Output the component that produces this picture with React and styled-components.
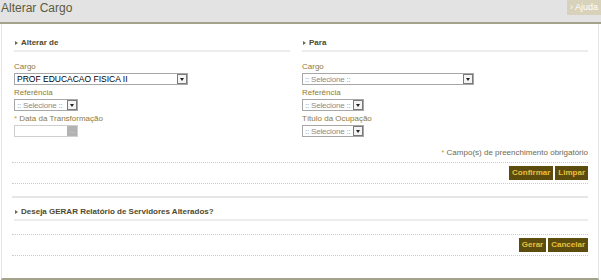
import React from 'react';
import styled, { createGlobalStyle } from 'styled-components';

const GlobalStyle = createGlobalStyle`
    body {
        margin: 0;
        background: #ffffff;
        font-family: "Liberation Sans", Arial, sans-serif;
    }
`;

const Page = styled.div`
    width: 601px;
    height: 280px;
    display: flex;
    flex-direction: column;
    overflow: hidden;
`;

const Header = styled.div`
    height: 22px;
    background: #e3e3e3;
    border-bottom: 2px solid #a3a38c;
    display: flex;
    justify-content: space-between;
    align-items: flex-start;
`;

const Title = styled.div`
    font-size: 12px;
    color: #5c5a3e;
    padding: 1px 0 0 1px;
    line-height: 14px;
`;

const HelpButton = styled.div`
    width: 34px;
    height: 15px;
    background: #d8d2ba;
    color: #ffffff;
    font-size: 9px;
    line-height: 15px;
    text-align: center;
`;

const Body = styled.div`
    flex: 1;
    margin: 0 2px 0 1px;
    border-left: 1px solid #e4e4e4;
    border-right: 1px solid #e4e4e4;
    border-bottom: 2px solid #a3a38c;
    padding: 14px 10px 0 10px;
    display: flex;
    flex-direction: column;
`;

const Columns = styled.div`
    display: grid;
    grid-template-columns: 288px 286px;
    padding-left: 2px;
`;

const Column = styled.div`
    display: flex;
    flex-direction: column;
`;

const SectionTitle = styled.div`
    font-size: 8px;
    font-weight: bold;
    color: #4e4a2e;
    border-bottom: 2px solid #ececec;
    padding: 0 0 2px 1px;
    margin-right: ${(p) => p.$gap || 0}px;
    display: flex;
    align-items: center;
    gap: 3px;
    line-height: 10px;

    &::before {
        content: '';
        border-left: 3px solid #6e6a4a;
        border-top: 2.5px solid transparent;
        border-bottom: 2.5px solid transparent;
    }
`;

const Field = styled.div`
    display: flex;
    flex-direction: column;
    margin-top: ${(p) => p.$top || 3}px;
`;

const Label = styled.div`
    font-size: 8px;
    line-height: 10px;
    color: #8c7a3e;
    height: 10px;
    white-space: nowrap;

    span {
        color: #c9a040;
    }
`;

const Select = styled.div`
    width: ${(p) => p.$width}px;
    height: 10px;
    border: 1px solid #a7a7a7;
    display: flex;
    align-items: center;
    justify-content: space-between;
    font-size: ${(p) => (p.$filled ? 8.5 : 8)}px;
    letter-spacing: ${(p) => (p.$filled ? 0 : -0.2)}px;
    white-space: nowrap;
    overflow: hidden;
    color: ${(p) => (p.$filled ? '#000000' : '#8a8a8a')};
    padding-left: 2px;
    box-sizing: content-box;
    margin-top: 1px;
`;

const Arrow = styled.div`
    flex-shrink: 0;
    width: 8px;
    height: 8px;
    border: 1px solid #7a7a7a;
    display: flex;
    align-items: center;
    justify-content: center;
    background: #f4f4f4;

    &::after {
        content: '';
        border-top: 3px solid #222;
        border-left: 2.5px solid transparent;
        border-right: 2.5px solid transparent;
    }
`;

const DateInput = styled.div`
    width: 62px;
    height: 10px;
    border: 1px solid #cfcfcf;
    display: flex;
    justify-content: flex-end;
    margin-top: 1px;
`;

const DateButton = styled.div`
    width: 10px;
    height: 10px;
    background: #b3b3b3;
    color: #e0e0e0;
    font-size: 6px;
    line-height: 10px;
    text-align: center;
`;

const Required = styled.div`
    font-size: 8px;
    color: #6e6a52;
    text-align: right;
    margin-top: 11px;
    line-height: 10px;

    span {
        color: #c9a040;
    }
`;

const Dotted = styled.div`
    border-top: 1px dotted #cccccc;
    margin-top: ${(p) => p.$top || 0}px;
`;

const ButtonRow = styled.div`
    display: flex;
    justify-content: flex-end;
    gap: 2px;
    padding: 3px 0 3px;
`;

const Button = styled.div`
    height: 14px;
    padding: 0 3px;
    background: #5c4c0e;
    color: #e8c03c;
    font-size: 8px;
    font-weight: bold;
    line-height: 14px;
`;

const Divider = styled.div`
    border-top: 2px solid #e6e6e6;
    margin-top: 12px;
`;

const Report = styled.div`
    padding-left: 2px;
    margin-top: 9px;
`;

function App() {
    return (
        <Page>
            <GlobalStyle />
            <Header>
                <Title>Alterar Cargo</Title>
                <HelpButton>› Ajuda</HelpButton>
            </Header>
            <Body>
                <Columns>
                    <Column>
                        <SectionTitle $gap={12}>Alterar de</SectionTitle>
                        <Field $top={10}>
                            <Label>Cargo</Label>
                            <Select $width={170} $filled>
                                PROF EDUCACAO FISICA II
                                <Arrow />
                            </Select>
                        </Field>
                        <Field>
                            <Label>Referência</Label>
                            <Select $width={60}>
                                :: Selecione ::
                                <Arrow />
                            </Select>
                        </Field>
                        <Field>
                            <Label><span>* </span>Data da Transformação</Label>
                            <DateInput>
                                <DateButton>...</DateButton>
                            </DateInput>
                        </Field>
                    </Column>
                    <Column>
                        <SectionTitle>Para</SectionTitle>
                        <Field $top={10}>
                            <Label>Cargo</Label>
                            <Select $width={168}>
                                :: Selecione ::
                                <Arrow />
                            </Select>
                        </Field>
                        <Field>
                            <Label>Referência</Label>
                            <Select $width={58}>
                                :: Selecione ::
                                <Arrow />
                            </Select>
                        </Field>
                        <Field>
                            <Label>Título da Ocupação</Label>
                            <Select $width={58}>
                                :: Selecione ::
                                <Arrow />
                            </Select>
                        </Field>
                    </Column>
                </Columns>
                <Required><span>* </span>Campo(s) de preenchimento obrigatório</Required>
                <Dotted $top={4} />
                <ButtonRow>
                    <Button>Confirmar</Button>
                    <Button>Limpar</Button>
                </ButtonRow>
                <Dotted />
                <Divider />
                <Report>
                    <SectionTitle>Deseja GERAR Relatório de Servidores Alterados?</SectionTitle>
                </Report>
                <Dotted $top={13} />
                <ButtonRow>
                    <Button>Gerar</Button>
                    <Button>Cancelar</Button>
                </ButtonRow>
                <Dotted />
            </Body>
        </Page>
    );
}

export default App;
